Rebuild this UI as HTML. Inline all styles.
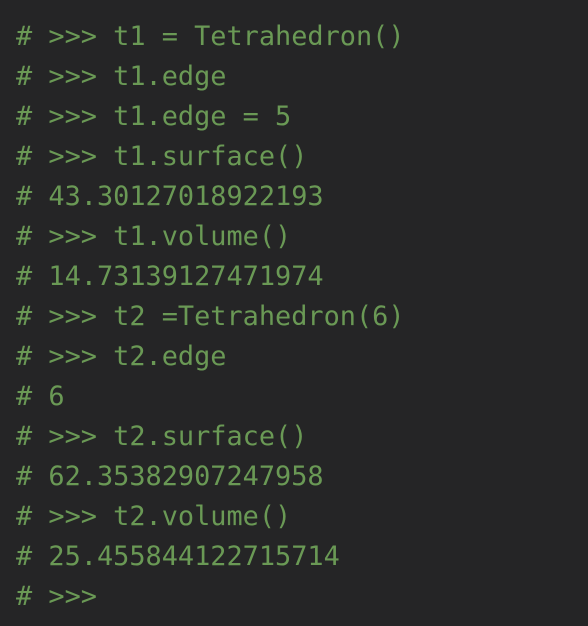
<!DOCTYPE html>
<html><head><style>
html,body{margin:0;padding:0;background:#252526;}
body{width:588px;height:626px;overflow:hidden;}
pre{margin:0;padding:17px 0 0 16px;font-family:"DejaVu Sans Mono","Liberation Mono",monospace;font-size:26.9px;line-height:40px;color:#6a9955;}
</style></head><body><pre># &gt;&gt;&gt; t1 = Tetrahedron()
# &gt;&gt;&gt; t1.edge
# &gt;&gt;&gt; t1.edge = 5
# &gt;&gt;&gt; t1.surface()
# 43.30127018922193
# &gt;&gt;&gt; t1.volume()
# 14.73139127471974
# &gt;&gt;&gt; t2 =Tetrahedron(6)
# &gt;&gt;&gt; t2.edge
# 6
# &gt;&gt;&gt; t2.surface()
# 62.35382907247958
# &gt;&gt;&gt; t2.volume()
# 25.455844122715714
# &gt;&gt;&gt;</pre></body></html>
